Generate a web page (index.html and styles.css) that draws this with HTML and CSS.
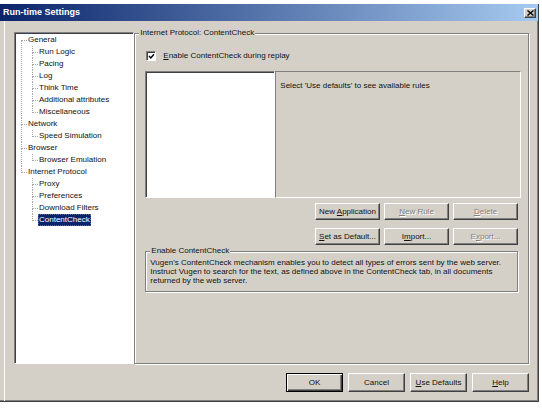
FILE: index.html
```html
<!DOCTYPE html>
<html>
<head>
<meta charset="utf-8">
<title>Run-time Settings</title>
<link rel="stylesheet" href="styles.css">
</head>
<body>
<div class="window">
  <div class="titlebar">
    <span class="title">Run-time Settings</span>
    <span class="close"><svg width="7" height="6" viewBox="0 0 7 6"><path d="M0.5 0.5 L6.5 5.5 M6.5 0.5 L0.5 5.5" stroke="#000" stroke-width="1.4" fill="none"/></svg></span>
  </div>
  <div class="client">
    <div class="main">
      <div class="tree">
        <ul class="tree-root">
          <li><span class="label">General</span>
            <ul>
              <li><span class="label">Run Logic</span></li>
              <li><span class="label">Pacing</span></li>
              <li><span class="label">Log</span></li>
              <li><span class="label">Think Time</span></li>
              <li><span class="label">Additional attributes</span></li>
              <li><span class="label">Miscellaneous</span></li>
            </ul>
          </li>
          <li><span class="label">Network</span>
            <ul>
              <li><span class="label">Speed Simulation</span></li>
            </ul>
          </li>
          <li><span class="label">Browser</span>
            <ul>
              <li><span class="label">Browser Emulation</span></li>
            </ul>
          </li>
          <li><span class="label">Internet Protocol</span>
            <ul>
              <li><span class="label">Proxy</span></li>
              <li><span class="label">Preferences</span></li>
              <li><span class="label">Download Filters</span></li>
              <li><span class="label selected">ContentCheck</span></li>
            </ul>
          </li>
        </ul>
      </div>
      <div class="group">
        <div class="group-title">Internet Protocol: ContentCheck</div>
        <div class="check">
          <span class="box"><svg width="7" height="7" viewBox="0 0 7 7"><path d="M1 3 L2.8 5 L6 1.2" stroke="#000" stroke-width="1.4" fill="none"/></svg></span>
          <span><u>E</u>nable ContentCheck during replay</span>
        </div>
        <div class="lists">
          <div class="list"></div>
          <div class="pane">Select 'Use defaults' to see available rules</div>
        </div>
        <div class="btnrow">
          <button class="btn">New <u>A</u>pplication</button>
          <button class="btn disabled"><u>N</u>ew Rule</button>
          <button class="btn disabled"><u>D</u>elete</button>
        </div>
        <div class="btnrow second">
          <button class="btn"><u>S</u>et as Default...</button>
          <button class="btn">I<u>m</u>port...</button>
          <button class="btn disabled">E<u>x</u>port...</button>
        </div>
        <div class="info">
          <div class="group-title info-title">Enable ContentCheck</div>
          <p class="info-text">Vugen's ContentCheck mechanism enables you to detect all types of errors sent by the web server.<br>Instruct Vugen to search for the text, as defined above in the ContentCheck tab, in all documents<br>returned by the web server.</p>
        </div>
      </div>
    </div>
    <div class="footer">
      <button class="btn fbtn default">OK</button>
      <button class="btn fbtn">Cancel</button>
      <button class="btn fbtn"><u>U</u>se Defaults</button>
      <button class="btn fbtn"><u>H</u>elp</button>
    </div>
  </div>
</div>
</body>
</html>
```

FILE: styles.css
```css
html, body {
  margin: 0;
  padding: 0;
  background: #fff;
}
body {
  padding-top: 4px;
  font-family: "Liberation Sans", Arial, sans-serif;
  font-size: 8px;
  color: #111;
}
.window {
  width: 539px;
  height: 398px;
  box-sizing: border-box;
  background: #d4d0c8;
  border-right: 1px solid #404040;
  border-bottom: 1px solid #404040;
  box-shadow: inset -1px -1px 0 #808080;
  display: flex;
  flex-direction: column;
}
.titlebar {
  height: 17px;
  flex: none;
  box-sizing: border-box;
  background: linear-gradient(to right, #0a246a, #a6caf0);
  display: flex;
  align-items: center;
  justify-content: space-between;
  padding: 0 2px 0 3px;
}
.title {
  color: #fff;
  font-weight: bold;
  font-size: 9px;
  line-height: 11px;
}
.close {
  width: 12px;
  height: 10px;
  box-sizing: border-box;
  background: #d4d0c8;
  border: 1px solid;
  border-color: #fff #404040 #404040 #fff;
  box-shadow: inset -1px -1px 0 #808080;
  display: flex;
  align-items: center;
  justify-content: center;
}
.close svg { display: block; }
.client {
  flex: 1;
  display: flex;
  flex-direction: column;
  margin-left: 4px;
  border-left: 1px solid #fff;
  padding: 11px 9px 0 9px;
}
.main {
  display: flex;
  align-items: flex-start;
}
.tree {
  width: 121px;
  height: 332px;
  box-sizing: border-box;
  background: #fff;
  border: 1px solid;
  border-color: #808080 #fff #fff #808080;
  box-shadow: inset 1px 1px 0 #404040;
  padding: 1px 0 0 6px;
  overflow: hidden;
}
.tree ul {
  list-style: none;
  margin: 0;
  padding: 0;
}
.tree li {
  position: relative;
  padding-left: 6px;
  line-height: 12px;
  white-space: nowrap;
}
.tree li::before {
  content: "";
  position: absolute;
  left: 0;
  top: 0;
  width: 5px;
  height: 6px;
  border-left: 1px dotted #a8a8a8;
  border-bottom: 1px dotted #a8a8a8;
}
.tree li:not(:last-child)::after {
  content: "";
  position: absolute;
  left: 0;
  top: 6px;
  bottom: 0;
  border-left: 1px dotted #a8a8a8;
}
.tree-root > li:first-child::before {
  top: 6px;
  height: 0;
}
.tree li ul {
  margin-left: 5px;
}
.label {
  display: inline-block;
  height: 12px;
  line-height: 12px;
  padding: 0 1px;
}
.label.selected {
  background: #0a246a;
  color: #fff;
  outline: 1px dotted #5a6a98;
  outline-offset: -1px;
}
.group {
  width: 397px;
  height: 331px;
  box-sizing: border-box;
  margin-top: 1px;
  border: 1px solid #808080;
  box-shadow: 1px 1px 0 #fff, inset 1px 1px 0 #fff;
  padding: 0 7px 0 10px;
  display: flex;
  flex-direction: column;
}
.group-title {
  align-self: flex-start;
  margin: -5px 0 0 -6px;
  padding: 0 1px;
  line-height: 8px;
  height: 8px;
  background: #d4d0c8;
  white-space: nowrap;
}
.check {
  margin-top: 13px;
  height: 11px;
  display: flex;
  align-items: center;
  gap: 7px;
  padding-left: 1px;
  line-height: 11px;
}
.box {
  width: 10px;
  height: 10px;
  box-sizing: border-box;
  background: #fff;
  border: 1px solid;
  border-color: #808080 #fff #fff #808080;
  box-shadow: inset 1px 1px 0 #404040;
  display: flex;
  align-items: center;
  justify-content: center;
  padding: 1px 0 0 1px;
}
.box svg { display: block; }
.lists {
  margin-top: 10px;
  height: 127px;
  display: flex;
}
.list {
  width: 130px;
  box-sizing: border-box;
  background: #fff;
  border: 1px solid;
  border-color: #808080 #fff #fff #808080;
  box-shadow: inset 1px 1px 0 #404040;
}
.pane {
  flex: 1;
  box-sizing: border-box;
  border: 1px solid;
  border-color: #808080 #fff #fff #808080;
  padding: 9px 4px 0 4px;
  line-height: 10px;
}
.btnrow {
  margin-top: 5px;
  margin-right: 3px;
  display: flex;
  justify-content: flex-end;
  gap: 4px;
}
.btnrow.second {
  margin-top: 8px;
}
.btn {
  font-family: "Liberation Sans", Arial, sans-serif;
  font-size: 8px;
  color: #111;
  width: 65px;
  height: 17px;
  box-sizing: border-box;
  margin: 0;
  padding: 0;
  background: #d4d0c8;
  border: 1px solid;
  border-color: #fff #404040 #404040 #fff;
  box-shadow: inset -1px -1px 0 #808080;
  white-space: nowrap;
  line-height: 14px;
}
.btn.disabled {
  color: #808080;
  text-shadow: 1px 1px 0 #fff;
}
.info {
  margin-top: 6px;
  margin-right: 3px;
  height: 41px;
  box-sizing: border-box;
  border: 1px solid #808080;
  box-shadow: 1px 1px 0 #fff, inset 1px 1px 0 #fff;
  padding: 0 4px;
  display: flex;
  flex-direction: column;
}
.info-title {
  margin-left: 0;
}
.info-text {
  margin: 3px 0 0 0;
  line-height: 9px;
  white-space: nowrap;
  height: 27px;
  overflow: hidden;
}
.footer {
  margin-top: 9px;
  display: flex;
  justify-content: flex-end;
  gap: 5px;
}
.fbtn {
  width: 57px;
  height: 19px;
  line-height: 16px;
}
.fbtn.default {
  border: 1px solid #000;
  box-shadow: inset 1px 1px 0 #fff, inset -1px -1px 0 #404040, inset -2px -2px 0 #808080;
}
```
